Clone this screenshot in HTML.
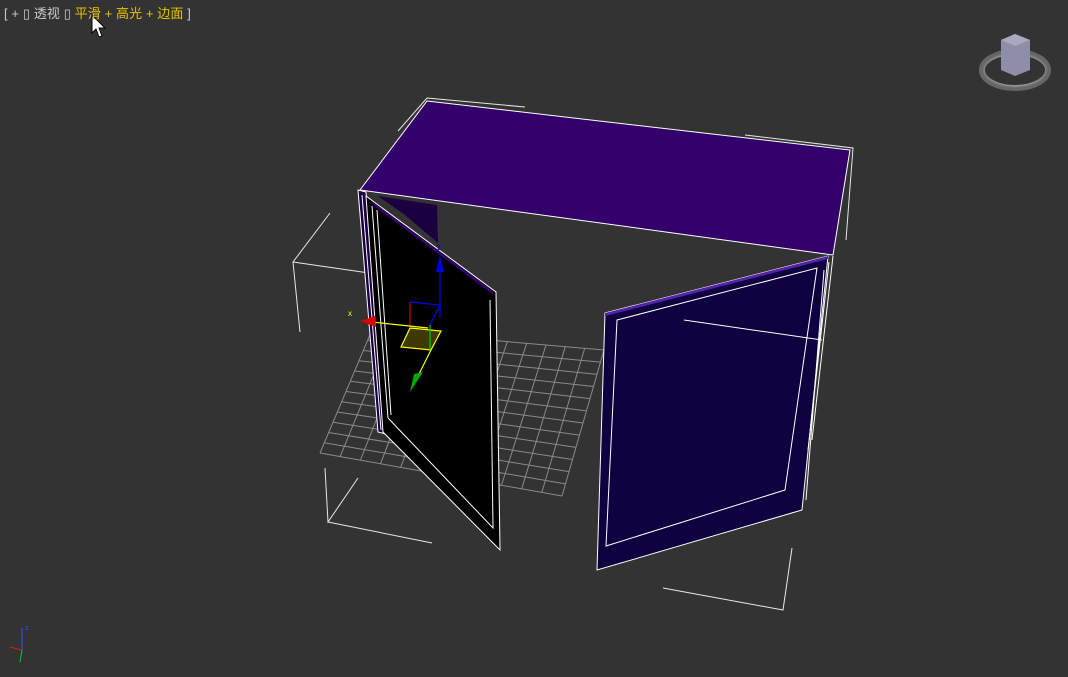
<!DOCTYPE html>
<html><head><meta charset="utf-8"><style>
html,body{margin:0;padding:0;background:#333;}
#v{position:relative;width:1068px;height:677px;overflow:hidden;background:#333;}
.lbl{position:absolute;left:4px;top:3px;font:13px "Liberation Sans","Noto Sans CJK SC",sans-serif;color:#c8c8c8;white-space:pre;letter-spacing:0.1px;}
.y{color:#e8c400;}
</style></head><body><div id="v">
<svg width="1068" height="677" style="position:absolute;left:0;top:0">
<defs><radialGradient id="rg" cx="50%" cy="50%" r="50%"><stop offset="60%" stop-color="#555"/><stop offset="80%" stop-color="#aaa"/><stop offset="100%" stop-color="#666"/></radialGradient></defs>
<g stroke="#8a8a8a" stroke-width="1" fill="none" id="grid"></g>
<g stroke="#e8e8e8" stroke-width="1" fill="none">
<path d="M300,332 L293,262 L330,213 M293,262 L417,280"/>
<path d="M325,468 L328,522 L358,478 M328,522 L432,543"/>
<path d="M663,588 L783,610 L792,548"/>
<path d="M398,131 L427,98 L525,107"/>
<path d="M745,135 L853,148 L846,240"/>
</g>
<polygon points="427,101 850,150 833,255 360,190" fill="#33006b" stroke="#fff" stroke-width="1"/>
<polygon points="378,196 437,205 438,243 405,215" fill="#1a0040"/>
<polygon points="358,190 366,192 386,434 378,432" fill="#1a0040" stroke="#fff" stroke-width="1"/>
<line x1="362" y1="195" x2="381" y2="430" stroke="#fff"/>
<polygon points="366,196 496,292 500,550 383,432" fill="#000" stroke="#fff" stroke-width="1"/>
<polygon points="370,200 492,290 495,296 374,206" fill="#33006b"/>
<polyline points="490,300 493,528 388,418" fill="none" stroke="#fff"/>
<line x1="372" y1="206" x2="388" y2="418" stroke="#fff"/>
<line x1="377" y1="210" x2="391" y2="415" stroke="#fff"/>
<polygon points="605,313 828,256 802,510 597,570" fill="#0f0040" stroke="#fff" stroke-width="1"/>
<polygon points="605,313 828,256 828,259 605,316" fill="#5522aa"/>
<polygon points="617,320 817,268 785,490 606,546" fill="none" stroke="#fff"/>
<path d="M833,256 L812,440 M829,262 L808,450 M824,270 L806,500 M684,320 L822,340" stroke="#fff" fill="none"/>
<g stroke-width="1.2" fill="none">
<polyline points="410,302 410,326" stroke="#d00000"/>
<polyline points="410,302 440,305 440,318" stroke="#0000ee"/>
<line x1="440" y1="262" x2="440" y2="305" stroke="#0000ee"/>
<line x1="440" y1="305" x2="430" y2="325" stroke="#0000ee"/>
<line x1="372" y1="322" x2="428" y2="328" stroke="#ffff00"/>
<polygon points="410,328 441,331 431,350 401,347" fill="#5a5000" fill-opacity=".7" stroke="#ffff00"/>
<line x1="430" y1="325" x2="430" y2="350" stroke="#00cc00"/>
<line x1="431" y1="350" x2="416" y2="380" stroke="#ffff00"/>
</g>
<polygon points="440,255 436,272 444,272" fill="#0000dd"/>
<polygon points="360,321 375,316 376,327" fill="#dd0000"/>
<polygon points="423,372 410,392 414,374" fill="#00aa00"/>
<text x="348" y="316" font-size="8" fill="#ffff00" font-family="Liberation Sans">x</text>
<text x="437" y="250" font-size="8" fill="#0000ee" font-family="Liberation Sans">z</text>
<ellipse cx="1015" cy="70" rx="33" ry="18" fill="none" stroke="url(#rg)" stroke-width="6"/>
<polygon points="1001,40 1015,34 1030,40 1030,70 1015,76 1001,70" fill="#8e8ea8"/>
<polygon points="1001,40 1015,34 1030,40 1015,46" fill="#a8a8c0"/>
<g stroke-width="1"><line x1="22" y1="650" x2="22" y2="628" stroke="#3050ff"/><line x1="22" y1="650" x2="10" y2="647" stroke="#d02020"/><line x1="22" y1="650" x2="20" y2="662" stroke="#20c020"/></g>
<text x="25" y="630" font-size="7" fill="#3050ff" font-family="Liberation Sans">z</text>
<path d="M92,15 L92,33 L96,29 L99,37 L102,36 L99,28 L105,28 Z" fill="#fff" stroke="#000" stroke-width="1"/>
</svg>
<div class="lbl">[ + ▯ 透视 ▯ <span class="y">平滑 + 高光 + 边面</span> ]</div>
</div>
<script>
(function(){var g=document.getElementById('grid');var A=[372,330],B=[604,350],C=[562,496],D=[320,453],n=12,s='';
function L(p,q,t){return [p[0]+(q[0]-p[0])*t,p[1]+(q[1]-p[1])*t];}
for(var i=0;i<=n;i++){var t=i/n;var a=L(A,B,t),b=L(D,C,t),c=L(A,D,t),d=L(B,C,t);
s+='M'+a[0]+','+a[1]+'L'+b[0]+','+b[1]+'M'+c[0]+','+c[1]+'L'+d[0]+','+d[1];}
var p=document.createElementNS('http://www.w3.org/2000/svg','path');p.setAttribute('d',s);g.appendChild(p);})();
</script>
</body></html>
